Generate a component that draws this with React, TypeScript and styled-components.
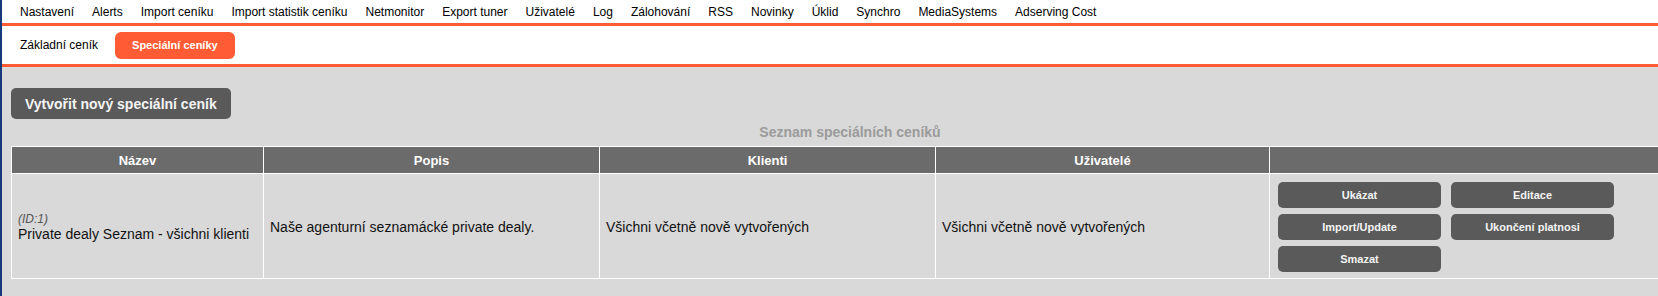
import React from "react";
import styled, { createGlobalStyle } from "styled-components";

const orange = "#ff5b34";

const GlobalStyle = createGlobalStyle`
  html, body {
    margin: 0;
    padding: 0;
    overflow: hidden;
    background: #d9d9d9;
    font-family: "Liberation Sans", Arial, Helvetica, sans-serif;
  }
`;

const Page = styled.div`
  min-height: 100vh;
  border-left: 2px solid #17387a;
  background: #d9d9d9;
`;

const TopNav = styled.nav`
  height: 23px;
  display: flex;
  align-items: center;
  padding-left: 9px;
  background: #fff;
  border-bottom: 3px solid ${orange};
`;

const NavLink = styled.a`
  padding: 0 9px;
  font-size: 12px;
  color: #000;
  text-decoration: none;
  white-space: nowrap;
`;

const SubNav = styled.div`
  height: 38px;
  display: flex;
  align-items: center;
  padding-left: 1px;
  background: #fff;
  border-bottom: 3px solid ${orange};
`;

const Tab = styled.a<{ $active?: boolean }>`
  height: 27px;
  line-height: 27px;
  padding: 0 17px;
  border-radius: 6px;
  white-space: nowrap;
  text-decoration: none;
  color: ${(p) => (p.$active ? "#fff" : "#000")};
  background: ${(p) => (p.$active ? orange : "transparent")};
  font-size: ${(p) => (p.$active ? "11px" : "12px")};
  font-weight: ${(p) => (p.$active ? "bold" : "normal")};
`;

const Content = styled.div`
  padding: 21px 0 0 9px;
`;

const CreateButton = styled.button`
  height: 31px;
  padding: 0 14px;
  border: 0;
  border-radius: 5px;
  background: #5a5a5a;
  color: #f4f4f4;
  font-family: inherit;
  font-size: 14px;
  font-weight: bold;
  cursor: pointer;
`;

const Caption = styled.div`
  width: 1678px;
  height: 27px;
  line-height: 27px;
  text-align: center;
  font-size: 14px;
  font-weight: bold;
  color: #9b9b9b;
`;

const Table = styled.table`
  width: 1678px;
  table-layout: fixed;
  border-collapse: collapse;
  border: 1px solid #fff;
`;

const HeadCell = styled.th`
  height: 26px;
  padding: 0;
  border: 1px solid #fff;
  background: #6b6b6b;
  color: #fff;
  font-size: 13px;
  font-weight: bold;
  text-align: center;
`;

const Cell = styled.td`
  padding: 2px 6px 0;
  border: 1px solid #fff;
  font-size: 14px;
  color: #111;
  vertical-align: middle;
`;

const ActionCell = styled.td`
  padding: 8px 0 6px 8px;
  border: 1px solid #fff;
  vertical-align: top;
`;

const IdLabel = styled.span`
  display: block;
  font-size: 12px;
  font-style: italic;
  color: #555;
`;

const Actions = styled.div`
  display: grid;
  grid-template-columns: 163px 163px;
  column-gap: 10px;
  row-gap: 6px;
`;

const ActionButton = styled.button`
  height: 26px;
  border: 0;
  border-radius: 5px;
  background: #5a5a5a;
  color: #f4f4f4;
  font-family: inherit;
  font-size: 11px;
  font-weight: bold;
  cursor: pointer;
`;

const menu = [
  "Nastavení",
  "Alerts",
  "Import ceníku",
  "Import statistik ceníku",
  "Netmonitor",
  "Export tuner",
  "Uživatelé",
  "Log",
  "Zálohování",
  "RSS",
  "Novinky",
  "Úklid",
  "Synchro",
  "MediaSystems",
  "Adserving Cost",
];

const columns = [
  { title: "Název", width: 252 },
  { title: "Popis", width: 336 },
  { title: "Klienti", width: 336 },
  { title: "Uživatelé", width: 334 },
  { title: "", width: 420 },
];

const actions = ["Ukázat", "Editace", "Import/Update", "Ukončení platnosi", "Smazat"];

const pricelists = [
  {
    id: 1,
    name: "Private dealy Seznam - všichni klienti",
    description: "Naše agenturní seznamácké private dealy.",
    clients: "Všichni včetně nově vytvořených",
    users: "Všichni včetně nově vytvořených",
  },
];

const App = () => {
  return (
    <>
      <GlobalStyle />
      <Page>
        <TopNav>
          {menu.map((item) => (
            <NavLink key={item}>{item}</NavLink>
          ))}
        </TopNav>
        <SubNav>
          <Tab>Základní ceník</Tab>
          <Tab $active>Speciální ceníky</Tab>
        </SubNav>
        <Content>
          <CreateButton>Vytvořit nový speciální ceník</CreateButton>
          <Caption>Seznam speciálních ceníků</Caption>
          <Table>
            <colgroup>
              {columns.map((col, i) => (
                <col key={i} style={{ width: col.width }} />
              ))}
            </colgroup>
            <thead>
              <tr>
                {columns.map((col, i) => (
                  <HeadCell key={i}>{col.title}</HeadCell>
                ))}
              </tr>
            </thead>
            <tbody>
              {pricelists.map((row) => (
                <tr key={row.id}>
                  <Cell>
                    <IdLabel>(ID:{row.id})</IdLabel>
                    {row.name}
                  </Cell>
                  <Cell>{row.description}</Cell>
                  <Cell>{row.clients}</Cell>
                  <Cell>{row.users}</Cell>
                  <ActionCell>
                    <Actions>
                      {actions.map((a) => (
                        <ActionButton key={a}>{a}</ActionButton>
                      ))}
                    </Actions>
                  </ActionCell>
                </tr>
              ))}
            </tbody>
          </Table>
        </Content>
      </Page>
    </>
  );
};

export default App;
